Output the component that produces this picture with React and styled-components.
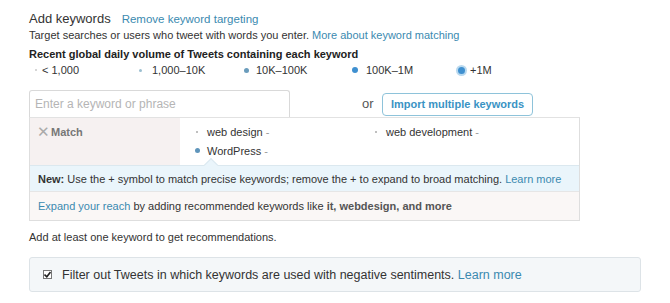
import React from "react";
import styled, { createGlobalStyle } from "styled-components";

const Global = createGlobalStyle`
  html, body { margin: 0; padding: 0; background: #fff; }
  body { font-family: Arial, "Liberation Sans", sans-serif; color: #333; }
`;

const Page = styled.div`
  padding: 11px 0 0 29px;
  width: 641px;
  box-sizing: border-box;
  font-size: 11px;
`;

const HeaderRow = styled.div`
  display: flex;
  align-items: baseline;
  gap: 11px;
  line-height: 16px;
`;

const Title = styled.span`
  font-size: 13px;
  color: #333;
`;

const Link = styled.a`
  color: #3b8ab0;
  text-decoration: none;
  font-size: ${(p) => p.$size || "inherit"};
`;

const Text = styled.div`
  line-height: 14px;
  margin-top: ${(p) => p.$mt || 0}px;
  font-weight: ${(p) => (p.$bold ? "bold" : "normal")};
  color: ${(p) => p.$color || "#333"};
`;

const Legend = styled.div`
  display: flex;
  line-height: 14px;
  margin-top: 2px;
`;

const LegendItem = styled.div`
  display: flex;
  align-items: center;
  width: ${(p) => p.$w}px;
  flex: none;
`;

const LegendLabel = styled.span`
  margin-left: ${(p) => p.$gap}px;
`;

const DotBox = styled.span`
  width: ${(p) => p.$w}px;
  display: inline-flex;
  justify-content: center;
  align-items: center;
  flex: none;
`;

const Dot = styled.span`
  width: ${(p) => p.$s}px;
  height: ${(p) => p.$s}px;
  border-radius: 50%;
  background: ${(p) => p.$c};
  box-shadow: ${(p) => (p.$halo ? "0 0 0 2px #b9d9ef" : "none")};
`;

const InputRow = styled.div`
  display: flex;
  align-items: center;
  margin-top: 13px;
  height: 27px;
`;

const Input = styled.input`
  width: 261px;
  height: 27px;
  box-sizing: border-box;
  border: 1px solid #d9d9d9;
  border-bottom: none;
  border-radius: 3px 3px 0 0;
  padding: 0 5px;
  font-family: Arial, "Liberation Sans", sans-serif;
  font-size: 12px;
  color: #333;
  outline: none;
  &::placeholder { color: #b5b5b5; }
`;

const Or = styled.span`
  margin-left: 72px;
  font-size: 13px;
  color: #555;
  width: 20px;
`;

const ImportButton = styled.button`
  height: 23px;
  width: 151px;
  box-sizing: border-box;
  border: 1px solid #8ec3da;
  border-radius: 4px;
  background: #fff;
  color: #3a93c4;
  font-family: Arial, "Liberation Sans", sans-serif;
  font-weight: bold;
  font-size: 11px;
  padding: 0;
  margin-top: 1px;
`;

const Panel = styled.div`
  width: 551px;
  box-sizing: border-box;
  border: 1px solid #dedede;
  border-top: 1px solid #e2e2e2;
`;

const MatchRow = styled.div`
  display: flex;
  height: 47px;
`;

const MatchLabel = styled.div`
  width: 150px;
  background: #f6f1f1;
  padding: 7px 0 0 7px;
  box-sizing: border-box;
  display: flex;
  align-items: flex-start;
  gap: 1px;
  font-weight: bold;
  color: #777;
  line-height: 14px;
`;

const Cross = styled.span`
  font-weight: normal;
  font-size: 15px;
  color: #aaa;
  line-height: 14px;
`;

const Keywords = styled.div`
  flex: 1;
  display: grid;
  grid-template-columns: 179px 1fr;
  grid-auto-rows: 19px;
  padding: 4px 0 0 13px;
`;

const Keyword = styled.div`
  display: flex;
  align-items: center;
  line-height: 14px;
  color: #333;
`;

const KwText = styled.span`
  margin-left: 6px;
`;

const Caret = styled.span`
  color: #999;
  margin-left: 3px;
`;

const InfoBar = styled.div`
  position: relative;
  height: 27px;
  background: #eaf5fb;
  border-top: 1px solid #dbe8ef;
  border-bottom: 1px solid #e6e6e6;
  box-sizing: border-box;
  padding-left: 8px;
  display: flex;
  align-items: center;
  &::before {
    content: "";
    position: absolute;
    left: 176px;
    top: -6px;
    width: 9px;
    height: 9px;
    background: #eaf5fb;
    border-left: 1px solid #dbe8ef;
    border-top: 1px solid #dbe8ef;
    transform: rotate(45deg);
  }
`;

const ExpandRow = styled.div`
  height: 28px;
  background: #faf7f6;
  padding-left: 8px;
  display: flex;
  align-items: center;
`;

const Strong = styled.b`
  color: #555;
`;

const Filter = styled.div`
  margin-top: 13px;
  width: 612px;
  height: 35px;
  box-sizing: border-box;
  background: #f4f7f9;
  border: 1px solid #dde3e7;
  border-radius: 3px;
  display: flex;
  align-items: center;
  padding-left: 13px;
  font-size: 12.5px;
  color: #333;
`;

const Check = styled.span`
  width: 9px;
  height: 9px;
  box-sizing: border-box;
  border: 1px solid #777;
  background: #fff;
  display: inline-flex;
  align-items: center;
  justify-content: center;
  margin-right: 10px;
`;

const legend = [
  { label: "< 1,000", s: 2, c: "#c8c8c8", w: 104, gap: -1 },
  { label: "1,000–10K", s: 3, c: "#9bbfd0", w: 106, gap: 5 },
  { label: "10K–100K", s: 5, c: "#6a9cbc", w: 109, gap: 3 },
  { label: "100K–1M", s: 6, c: "#3f90d0", w: 106, gap: 4 },
  { label: "+1M", s: 7, c: "#3f90d0", w: 60, gap: 2, halo: true },
];

const keywords = [
  { t: "web design", s: 2, c: "#aaa" },
  { t: "web development", s: 2, c: "#aaa" },
  { t: "WordPress", s: 5, c: "#5f95bb" },
];

export default function App() {
  return (
    <>
      <Global />
      <Page>
        <HeaderRow>
          <Title>Add keywords</Title>
          <Link $size="11.5px">Remove keyword targeting</Link>
        </HeaderRow>
        <Text $mt={1}>
          Target searches or users who tweet with words you enter.{" "}
          <Link>More about keyword matching</Link>
        </Text>
        <Text $mt={5} $bold $color="#222">
          Recent global daily volume of Tweets containing each keyword
        </Text>
        <Legend>
          {legend.map((l) => (
            <LegendItem key={l.label} $w={l.w}>
              <DotBox $w={14}>
                <Dot $s={l.s} $c={l.c} $halo={l.halo} />
              </DotBox>
              <LegendLabel $gap={l.gap}>{l.label}</LegendLabel>
            </LegendItem>
          ))}
        </Legend>
        <InputRow>
          <Input placeholder="Enter a keyword or phrase" />
          <Or>or</Or>
          <ImportButton>Import multiple keywords</ImportButton>
        </InputRow>
        <Panel>
          <MatchRow>
            <MatchLabel>
              <Cross>✕</Cross>
              <span>Match</span>
            </MatchLabel>
            <Keywords>
              {keywords.map((k) => (
                <Keyword key={k.t}>
                  <DotBox $w={8}>
                    <Dot $s={k.s} $c={k.c} />
                  </DotBox>
                  <KwText>
                    {k.t}
                    <Caret>-</Caret>
                  </KwText>
                </Keyword>
              ))}
            </Keywords>
          </MatchRow>
          <InfoBar>
            <span>
              <b>New:</b> Use the + symbol to match precise keywords; remove the + to expand to broad matching.{" "}
              <Link>Learn more</Link>
            </span>
          </InfoBar>
          <ExpandRow>
            <span>
              <Link>Expand your reach</Link> by adding recommended keywords like{" "}
              <Strong>it, webdesign, and more</Strong>
            </span>
          </ExpandRow>
        </Panel>
        <Text $mt={9}>Add at least one keyword to get recommendations.</Text>
        <Filter>
          <Check>
            <svg width="7" height="7" viewBox="0 0 7 7">
              <path d="M0.5 3.5 L2.8 5.8 L6.5 1" stroke="#222" strokeWidth="1.6" fill="none" />
            </svg>
          </Check>
          <span>
            Filter out Tweets in which keywords are used with negative sentiments.{" "}
            <Link>Learn more</Link>
          </span>
        </Filter>
      </Page>
    </>
  );
}
